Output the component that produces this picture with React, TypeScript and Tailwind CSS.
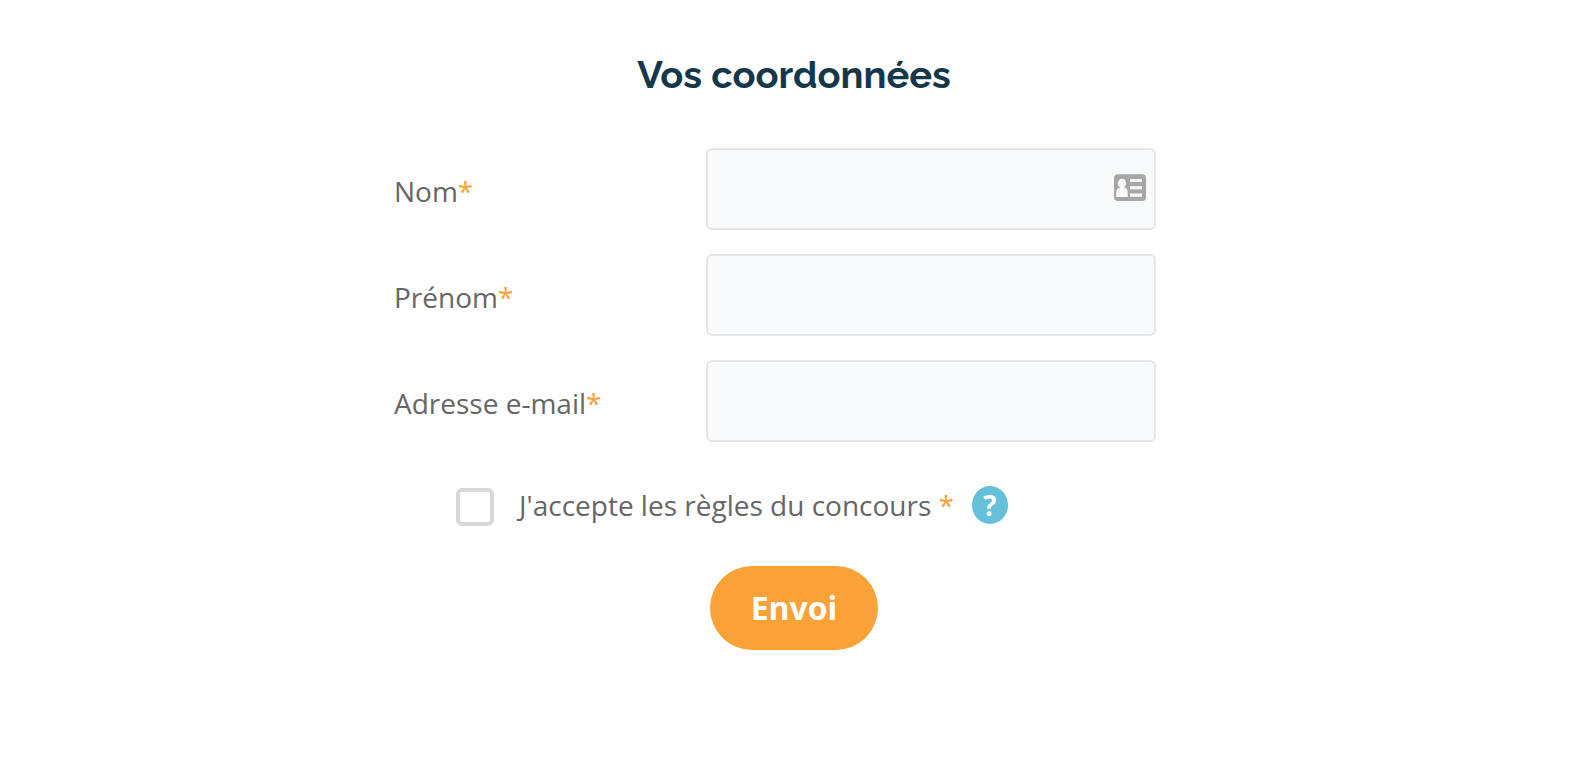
import React from "react";

type Field = { id: string; label: string; type: string; card?: boolean };

const fields: Field[] = [
  { id: "nom", label: "Nom", type: "text", card: true },
  { id: "prenom", label: "Prénom", type: "text" },
  { id: "email", label: "Adresse e-mail", type: "email" },
];

function ContactCardIcon() {
  return (
    <svg
      viewBox="0 0 32 27"
      aria-hidden="true"
      className="pointer-events-none absolute top-[26px] right-[10px] h-[27px] w-8"
    >
      <rect y="0.3" width="32" height="26.700" rx="4" fill="#a6a6a6" />
      <g fill="#f9fafc">
        <ellipse cx="8" cy="9.3" rx="4.1" ry="4.6" />
        <path d="M4.600 13.600Q8 16 11.400 13.600C13.300 15 13.800 17.300 13.800 20V22.900H2.200V20C2.200 17.300 2.800 15 4.600 13.600z" />
        <path d="M6 12h4v4h-4z" />
        <path d="M16 5h12v3H16zM16 12.200h12v3H16zM16 19.600h12v3.200H16z" />
      </g>
    </svg>
  );
}

function Required() {
  return <span className="text-[#faa138]">*</span>;
}

export default function App() {
  return (
    <main className="min-h-screen bg-white pt-[50px] pb-12 pl-1 font-['Open_Sans',sans-serif] text-[28px] leading-[38px] text-[#666666]">
      <form className="mx-auto max-w-[800px]" onSubmit={(e) => e.preventDefault()}>
        <h1 className="text-center font-['Raleway','Lato',sans-serif] text-[38px] leading-[50px] font-bold text-[#15374a]">
          Vos coordonnées
        </h1>

        <div className="mt-12 flex flex-col gap-6">
          {fields.map((f) => (
            <div key={f.id} className="grid grid-cols-[312px_450px] items-center">
              <label htmlFor={f.id} className="pt-1">
                {f.label}
                <Required />
              </label>
              <div className="relative">
                <input
                  id={f.id}
                  type={f.type}
                  className="block h-[82px] w-full rounded-md border-2 border-[#e6e6e6] bg-[#f9fafc] px-4 outline-none"
                />
                {f.card && <ContactCardIcon />}
              </div>
            </div>
          ))}
        </div>

        <div className="mt-11 flex items-start pl-[62px]">
          <input
            id="rules"
            type="checkbox"
            className="mt-[2px] size-[38px] shrink-0 appearance-none rounded-md border-4 border-[#d8d8d8] bg-white checked:bg-[#faa138]"
          />
          <label htmlFor="rules" className="ml-[25px]">
            J'accepte les règles du concours <Required />
          </label>
          <button
            type="button"
            className="ml-[18px] h-[38px] w-9 rounded-[50%] bg-[#65c0da] text-center font-bold text-white"
          >
            ?
          </button>
        </div>

        <button
          type="submit"
          className="mx-auto mt-10 block h-[84px] rounded-full bg-[#faa138] px-[41px] text-[32px] font-bold text-white"
        >
          Envoi
        </button>
      </form>
    </main>
  );
}
